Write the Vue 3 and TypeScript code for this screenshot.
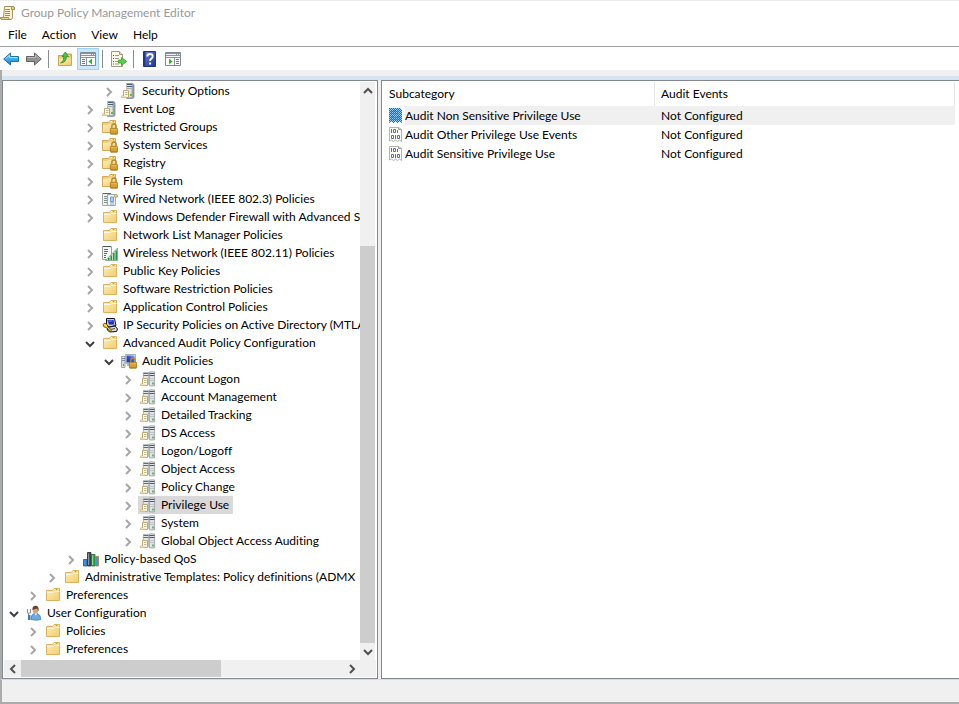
<script setup lang="ts">
import { ref } from 'vue'

interface TreeNode {
  label: string
  level: number
  icon: string
  state: 'open' | 'closed' | 'leaf'
}

interface AuditRow {
  name: string
  events: string
}

const menus: string[] = ['File', 'Action', 'View', 'Help']

const nodes: TreeNode[] = [
  { label: 'Security Options', level: 5, icon: 'server', state: 'closed' },
  { label: 'Event Log', level: 4, icon: 'server', state: 'closed' },
  { label: 'Restricted Groups', level: 4, icon: 'folder-lock', state: 'closed' },
  { label: 'System Services', level: 4, icon: 'folder-lock', state: 'closed' },
  { label: 'Registry', level: 4, icon: 'folder-lock', state: 'closed' },
  { label: 'File System', level: 4, icon: 'folder-lock', state: 'closed' },
  { label: 'Wired Network (IEEE 802.3) Policies', level: 4, icon: 'wired', state: 'closed' },
  { label: 'Windows Defender Firewall with Advanced Se', level: 4, icon: 'folder', state: 'closed' },
  { label: 'Network List Manager Policies', level: 4, icon: 'folder', state: 'leaf' },
  { label: 'Wireless Network (IEEE 802.11) Policies', level: 4, icon: 'wireless', state: 'closed' },
  { label: 'Public Key Policies', level: 4, icon: 'folder', state: 'closed' },
  { label: 'Software Restriction Policies', level: 4, icon: 'folder', state: 'closed' },
  { label: 'Application Control Policies', level: 4, icon: 'folder', state: 'closed' },
  { label: 'IP Security Policies on Active Directory (MTLA', level: 4, icon: 'ipsec', state: 'closed' },
  { label: 'Advanced Audit Policy Configuration', level: 4, icon: 'folder', state: 'open' },
  { label: 'Audit Policies', level: 5, icon: 'audit', state: 'open' },
  { label: 'Account Logon', level: 6, icon: 'servers', state: 'closed' },
  { label: 'Account Management', level: 6, icon: 'servers', state: 'closed' },
  { label: 'Detailed Tracking', level: 6, icon: 'servers', state: 'closed' },
  { label: 'DS Access', level: 6, icon: 'servers', state: 'closed' },
  { label: 'Logon/Logoff', level: 6, icon: 'servers', state: 'closed' },
  { label: 'Object Access', level: 6, icon: 'servers', state: 'closed' },
  { label: 'Policy Change', level: 6, icon: 'servers', state: 'closed' },
  { label: 'Privilege Use', level: 6, icon: 'servers', state: 'closed' },
  { label: 'System', level: 6, icon: 'servers', state: 'closed' },
  { label: 'Global Object Access Auditing', level: 6, icon: 'servers', state: 'closed' },
  { label: 'Policy-based QoS', level: 3, icon: 'qos', state: 'closed' },
  { label: 'Administrative Templates: Policy definitions (ADMX', level: 2, icon: 'folder', state: 'closed' },
  { label: 'Preferences', level: 1, icon: 'folder', state: 'closed' },
  { label: 'User Configuration', level: 0, icon: 'user', state: 'open' },
  { label: 'Policies', level: 1, icon: 'folder', state: 'closed' },
  { label: 'Preferences', level: 1, icon: 'folder', state: 'closed' },
]

const rows: AuditRow[] = [
  { name: 'Audit Non Sensitive Privilege Use', events: 'Not Configured' },
  { name: 'Audit Other Privilege Use Events', events: 'Not Configured' },
  { name: 'Audit Sensitive Privilege Use', events: 'Not Configured' },
]

const selectedNode = ref<string>('Privilege Use')
const selectedRow = ref<number>(0)
const indent = (level: number): string => `${level * 19}px`
</script>

<template>
  <svg class="sprite" aria-hidden="true">
    <defs>
      <linearGradient id="g-folder" x1="0" y1="0" x2="1" y2="1">
        <stop offset="0" stop-color="#ffeeb5" />
        <stop offset="1" stop-color="#f2cc72" />
      </linearGradient>
      <linearGradient id="g-tower" x1="0" y1="0" x2="1" y2="0">
        <stop offset="0" stop-color="#d3d9dc" />
        <stop offset="1" stop-color="#8d969b" />
      </linearGradient>
      <linearGradient id="g-lock" x1="0" y1="0" x2="0" y2="1">
        <stop offset="0" stop-color="#f0c548" />
        <stop offset="1" stop-color="#b8821a" />
      </linearGradient>
      <linearGradient id="g-blue" x1="0" y1="0" x2="0" y2="1">
        <stop offset="0" stop-color="#6cc8f8" />
        <stop offset="1" stop-color="#128ad8" />
      </linearGradient>
      <linearGradient id="g-help" x1="0" y1="0" x2="1" y2="1">
        <stop offset="0" stop-color="#6d84d6" />
        <stop offset="1" stop-color="#1b3597" />
      </linearGradient>
      <linearGradient id="g-screen" x1="1" y1="0" x2="0" y2="1">
        <stop offset="0" stop-color="#8aa8f0" />
        <stop offset="0.5" stop-color="#2f50cf" />
        <stop offset="1" stop-color="#1b2fa3" />
      </linearGradient>
      <pattern id="p-dither" width="2" height="2" patternUnits="userSpaceOnUse">
        <rect width="1" height="1" fill="#0078d7" />
        <rect x="1" y="1" width="1" height="1" fill="#0078d7" />
      </pattern>
      <g id="d-scroll">
        <path d="M2.500 7.500h5v7h-7v-1.500h2z" fill="#fdf8e2" stroke="#c0a873" />
        <path d="M4 9.500h2.500M4 11.500h2.500" stroke="#c5b88e" />
        <path d="M.5 13h5v1.500h-5z" fill="#efdfae" />
      </g>
      <g id="d-lock">
        <path d="M9.800 9V7.500a2.200 2.500 0 0 1 4.400 0V9" fill="none" stroke="#b08a30" stroke-width="1.300" />
        <rect x="8.400" y="9.400" width="7.200" height="5.800" rx=".6" fill="url(#g-lock)" stroke="#a3741a" stroke-width=".8" />
        <path d="M9 11.500h6M9 13.500h6" stroke="#d9a535" stroke-width=".8" />
      </g>
    </defs>

    <symbol id="i-title" viewBox="0 0 16 16">
      <path d="M4.500 1.500h9l1 1v2h-2v8q0 2-2 2H2q-1.500 0-1.500-2h3z" fill="#fbf3d3" stroke="#a8905c" />
      <path d="M12 1.500q-1 1-.5 3h3V3q0-1.500-1.500-1.500z" fill="#e7cf8c" stroke="#a8905c" />
      <path d="M.5 12.500h8q0 2 2 2H2.500q-2 0-2-2z" fill="#e9d08c" stroke="#a8905c" />
      <path d="M5 4.500h5M5 6.500h5M5 8.500h5M5 10.500h5" stroke="#8e8e86" />
    </symbol>

    <symbol id="i-back" viewBox="0 0 16 16">
      <path d="M.7 8 7.500 2v3.500h8v5h-8V14z" fill="url(#g-blue)" stroke="#1672b0" stroke-linejoin="round" />
      <path d="M2.500 7.700 6.600 4.200v2.300h8" fill="none" stroke="#a6e0fc" />
    </symbol>
    <symbol id="i-forward" viewBox="0 0 16 16">
      <path d="M15.300 8 8.500 2v3.500h-8v5h8V14z" fill="#929292" stroke="#656565" stroke-linejoin="round" />
      <path d="M1.500 6.500h8V4.200l4 3.500" fill="none" stroke="#bcbcbc" />
    </symbol>
    <symbol id="i-up" viewBox="0 0 16 16">
      <path d="M1.500 4.500h5.500l1.500-1.500h6v11.500h-13z" fill="#eccb75" stroke="#cfa44a" />
      <path d="M2 7.500h12v6.500H2z" fill="url(#g-folder)" />
      <path d="M9.500 3.500h4v1.500h-4z" fill="#fff" stroke="#b7964c" stroke-width=".6" />
      <path d="M3.500 12Q7 10.500 7 5.500H5L8.300 1l3.200 4.500H9.300q.3 6-5.800 6.500z" fill="#4cc445" stroke="#2c8f2b" stroke-width=".8" stroke-linejoin="round" />
    </symbol>
    <symbol id="i-pane-left" viewBox="0 0 16 16">
      <path d="M.5 1.500h15v13H.5z" fill="#fdfdfd" stroke="#808896" />
      <path d="M1 2h14v3H1z" fill="#8993a4" />
      <path d="M1 3.500h10M12 3.500h1M14 3.500h1" stroke="#eef1f6" />
      <path d="M1 6.500h14M6.500 7v7" stroke="#8b93a0" />
      <path d="M2 8.500h3M2 10.500h3M2 12.500h3" stroke="#6f7c93" />
      <path d="M12 7.500v6L8.500 10.500z" fill="#2fb52b" />
    </symbol>
    <symbol id="i-pane-right" viewBox="0 0 16 16">
      <path d="M.5 1.500h15v13H.5z" fill="#fdfdfd" stroke="#808896" />
      <path d="M1 2h14v3H1z" fill="#8993a4" />
      <path d="M1 3.500h10M12 3.500h1M14 3.500h1" stroke="#eef1f6" />
      <path d="M1 6.500h14M9.500 7v7" stroke="#8b93a0" />
      <path d="M11 8.500h3M11 10.500h3M11 12.500h3" stroke="#6f7c93" />
      <path d="M4 7.500v6l3.500-3z" fill="#2fb52b" />
    </symbol>
    <symbol id="i-export" viewBox="0 0 16 16">
      <path d="M.5.5h8l3 3v12H.5z" fill="#fdf9e6" stroke="#a49a80" />
      <path d="M8.500.5v3h3" fill="#e8dfc0" stroke="#a49a80" />
      <path d="M2 4.500h1M2 7.500h1M2 10.500h1M2 13h1" stroke="#555" />
      <path d="M4 4.500h4M4 7.500h4M4 10.500h3M4 13h4" stroke="#9a9a9a" />
      <path d="M7.500 9h3V6.500L15.700 10.500l-5.200 4V12h-3z" fill="#5bd04f" stroke="#2f9e2c" stroke-width=".8" stroke-linejoin="round" />
    </symbol>
    <symbol id="i-help" viewBox="0 0 16 16">
      <path d="M1.500.5h12v15h-12z" fill="url(#g-help)" stroke="#20367f" />
      <path d="M2 1h1.500v14H2z" fill="#243a8a" />
      <path d="M5.300 5.500Q5.300 3 8 3t2.700 2.300Q10.700 7 9.100 7.800 8.100 8.400 8.100 10" fill="none" stroke="#fff" stroke-width="1.900" />
      <path d="M7.100 11.500h2v2h-2z" fill="#fff" />
    </symbol>

    <symbol id="i-folder" viewBox="0 0 16 16">
      <path d="M1.500 3.500h6l1.500-2h5.500v12h-13z" fill="url(#g-folder)" stroke="#dcb25c" />
      <path d="M9 2.500h4.500" stroke="#fff" />
      <path d="M10.500 2.500h2" stroke="#6aa7d8" />
      <path d="M2 5.500h6.500l1-1h5" fill="none" stroke="#fff8da" />
    </symbol>
    <symbol id="i-folder-lock" viewBox="0 0 16 16">
      <path d="M.5 3.500h6l1.500-2h5.500v12H.5z" fill="#eed083" stroke="#d4aa55" />
      <path d="M8.500 2.500h4" stroke="#fff" />
      <path d="M10.500 2.500h1.500" stroke="#6aa7d8" />
      <path d="M1 13V6h4.500l1-1H13v8z" fill="url(#g-folder)" />
      <use href="#d-lock" />
    </symbol>
    <symbol id="i-server" viewBox="0 0 16 16">
      <path d="M5.500.5h6l1.500 1v13l-1.500 1h-6z" fill="url(#g-tower)" stroke="#848d92" stroke-width=".8" />
      <path d="M5.500 1h5v14h-5z" fill="#dfe3e5" />
      <path d="M6 1.500h5M6 3.500h5" stroke="#47606f" />
      <path d="M6 5.500h4.500M6 14.500h5" stroke="#a7b0b5" />
      <path d="M9 11h2v2H9z" fill="#5cc04a" />
      <use href="#d-scroll" />
    </symbol>
    <symbol id="i-servers" viewBox="0 0 16 16">
      <path d="M3.400 1.400h5.200v12H3.400z" fill="#e3e7e9" stroke="#a2abb0" stroke-width=".8" />
      <path d="M3.500 2.500h5M3.500 4.500h5" stroke="#5a6f7c" />
      <path d="M9.400.9h5.200v14H9.400z" fill="#dfe3e5" stroke="#929b9f" stroke-width=".8" />
      <path d="M9.500 2.500h5M9.500 4.500h5" stroke="#47606f" />
      <path d="M10 7.500h4M10 9.500h4" stroke="#bcc4c8" />
      <path d="M12 11.500h2v2h-2z" fill="#5cc04a" />
      <use href="#d-scroll" />
    </symbol>
    <symbol id="i-wired" viewBox="0 0 16 16">
      <path d="M.5 2.500h5v12h-5z" fill="#f2f3ef" stroke="#a5aaa5" />
      <path d="M2 5.500h3M2 7.500h3M2 9.500h3M2 11.500h3" stroke="#7c8f8c" />
      <path d="M1 2.500h8" stroke="#57656a" />
      <path d="M5.500 3.500h9l.9 1v1.500h-2v8.500h-8z" fill="#f1f4f6" stroke="#9aa8b3" />
      <path d="M12.500 3.500h2.500v2.500h-2.500z" fill="#efdfae" stroke="#b79f6c" stroke-width=".8" />
      <path d="M8.500 6h3v4.500h-3z" fill="#a9cdec" stroke="#5f90bf" stroke-width=".8" />
      <path d="M9 11h2v3.500H9z" fill="#fff" stroke="#6f96b9" stroke-width=".8" />
    </symbol>
    <symbol id="i-wireless" viewBox="0 0 16 16">
      <path d="M.5 1.500h9v13h-9z" fill="#f5f6f4" stroke="#98a09d" />
      <path d="M1 1.500h8" stroke="#47555a" />
      <path d="M2 4.500h4M2 6.500h4M2 8.500h3M2 10.500h2M2 12.500h2" stroke="#53706a" />
      <path d="M3.500 15.500 15.500 3v12.500z" fill="#c6e6c6" stroke="#6fa67c" stroke-width=".8" />
      <path d="M6 13h1.500v2H6zM8.500 10.500H10V15H8.500zM11 8h1.500v7H11zM13.500 5.500H15V15h-1.500z" fill="#27924a" />
    </symbol>
    <symbol id="i-ipsec" viewBox="0 0 16 16">
      <path d="M4.500 1.500h8l1.500 7-7 1.500-2.500-2z" fill="#c6cbd2" stroke="#111" />
      <path d="M5.500 3h6l.8 4.500H7z" fill="#1c2fc0" />
      <path d="M6.500 4h4" stroke="#7f93f2" />
      <path d="M5 10.500l8-1.500 2.500 3-1 2.500-7 .5-2-2z" fill="#d7dade" stroke="#111" />
      <path d="M8 12.500l5-1" stroke="#555" />
      <path d="M1 7.500l2-1.500 2.500 2v1.500l4 3.500-1.300 1.500L4.500 10.500 2 10z" fill="#f5dc2c" stroke="#4b4300" stroke-width=".8" />
    </symbol>
    <symbol id="i-audit" viewBox="0 0 16 16">
      <path d="M.5 3.500h3.500v11H.5z" fill="#d9dddf" stroke="#8e989d" stroke-width=".8" />
      <path d="M1 5.500h3M1 7.500h3" stroke="#7d8c96" />
      <path d="M2 11h1v2H2z" fill="#4db83d" />
      <path d="M4.500 1.500h10v9h-10z" fill="#e4e8ee" stroke="#a7b0bc" />
      <path d="M5.500 2.500h8v7h-8z" fill="url(#g-screen)" />
      <path d="M6 12h4" stroke="#b4bcc4" stroke-width="2" />
      <use href="#d-lock" />
    </symbol>
    <symbol id="i-qos" viewBox="0 0 16 16">
      <path d="M.5 8.500h3.500v6.500H.5z" fill="#3a8fdc" stroke="#1b5799" stroke-width=".8" />
      <path d="M4.500 1.500H8V15H4.500z" fill="#444f58" stroke="#1f2930" stroke-width=".8" />
      <path d="M8.500 3.500H12V15H8.500z" fill="#3dac4c" stroke="#1d6c2a" stroke-width=".8" />
      <path d="M12.500 5.500h3V15h-3z" fill="#3d97dd" stroke="#c0703a" stroke-width=".8" />
      <path d="M5.500 2.500V14" stroke="#8b969e" />
      <path d="M9.500 4.500V14" stroke="#7fdc86" />
    </symbol>
    <symbol id="i-user" viewBox="0 0 16 16">
      <path d="M5 14.500q0-5 3-6h3q3.800 1 3.800 6-4 1.500-9.800 0z" fill="#6bade2" stroke="#3f7fb8" stroke-width=".8" />
      <path d="M8.500 8.300l1.300 2.200 1.400-2.200z" fill="#fff" />
      <ellipse cx="9.500" cy="4.800" rx="2.900" ry="3.700" fill="#d9a67c" />
      <path d="M6.500 5Q6 1 9.500.8q3.700 0 3 5.200-1-.5-1.200-2.500Q8.500 4 6.500 5z" fill="#6a4326" />
      <path d="M1.500 4v3.500l1 1V15M4.500 4v3.500l-1 1" fill="none" stroke="#8b98a3" stroke-width="1.200" />
      <path d="M2 10h2.500v5H2z" fill="#4a78b5" />
    </symbol>
    <symbol id="i-binary" viewBox="0 0 16 16">
      <path d="M.5.5h9l3 2v12l-2-1.500-2 1.500-2-1.500-2 1.500-2-1.500-2 1z" fill="#fff" stroke="#b4b4b4" />
      <path d="M9.500.5v2h3" fill="none" stroke="#a0a0a0" />
      <path d="M2.500 2v4M8.500 3v3M4.500 2.500h2v3h-2zM2.500 8.500h2v3h-2zM6.500 8v4M8.500 8.500h2v3h-2z" fill="none" stroke="#6464b4" />
    </symbol>
    <symbol id="i-binary-selected" viewBox="0 0 16 16">
      <path d="M0 0h11l2 2v13l-2.500-1.500-2 1.500-2-1.500-2 1.500-2-1.500L0 15z" fill="#8fcdf8" />
      <path d="M0 0h11l2 2v13l-2.500-1.500-2 1.500-2-1.500-2 1.500-2-1.500L0 15z" fill="url(#p-dither)" />
      <path d="M2.500 2v4M8.500 3v3M4.500 2.500h2v3h-2zM2.500 8.500h2v3h-2zM6.500 8v4M8.500 8.500h2v3h-2z" fill="none" stroke="#0f74d0" stroke-opacity=".5" />
    </symbol>
  </svg>

  <div class="window">
    <header class="titlebar">
      <svg class="icon"><use href="#i-title" /></svg>
      <h1 class="title">Group Policy Management Editor</h1>
    </header>

    <nav class="menubar">
      <button v-for="menu in menus" :key="menu" type="button" class="menu">{{ menu }}</button>
    </nav>

    <div class="toolbar" role="toolbar">
      <button type="button" class="tool" aria-label="Back"><svg class="icon"><use href="#i-back" /></svg></button>
      <button type="button" class="tool" aria-label="Forward"><svg class="icon"><use href="#i-forward" /></svg></button>
      <span class="separator"></span>
      <button type="button" class="tool" aria-label="Up one level"><svg class="icon"><use href="#i-up" /></svg></button>
      <button type="button" class="tool active" aria-label="Show or hide console tree" aria-pressed="true"><svg class="icon"><use href="#i-pane-left" /></svg></button>
      <span class="separator"></span>
      <button type="button" class="tool" aria-label="Export list"><svg class="icon"><use href="#i-export" /></svg></button>
      <span class="separator"></span>
      <button type="button" class="tool" aria-label="Help"><svg class="icon"><use href="#i-help" /></svg></button>
      <button type="button" class="tool" aria-label="Show or hide action pane"><svg class="icon"><use href="#i-pane-right" /></svg></button>
    </div>

    <main class="workspace">
      <section class="pane tree-pane">
        <ul class="tree" role="tree">
          <li
            v-for="(node, i) in nodes"
            :key="i"
            class="node"
            role="treeitem"
            :aria-level="node.level + 1"
            :aria-selected="node.label === selectedNode"
            :style="{ paddingLeft: indent(node.level) }"
          >
            <button
              v-if="node.state !== 'leaf'"
              type="button"
              class="expander"
              :class="node.state"
              :aria-label="node.state === 'open' ? 'Collapse' : 'Expand'"
            >
              <svg v-if="node.state === 'closed'" class="chevron" viewBox="0 0 10 10"><path d="M3 1l4 4-4 4" /></svg>
              <svg v-else class="chevron" viewBox="0 0 10 10"><path d="M1 3l4 4 4-4" /></svg>
            </button>
            <span v-else class="expander"></span>
            <button
              type="button"
              class="entry"
              :class="{ selected: node.label === selectedNode }"
              @click="selectedNode = node.label"
            >
              <svg class="icon"><use :href="`#i-${node.icon}`" /></svg>
              <span class="entry-label">{{ node.label }}</span>
            </button>
          </li>
        </ul>
        <div class="scroll vertical">
          <button type="button" class="scroll-arrow" aria-label="Scroll up"><svg class="chevron" viewBox="0 0 10 10"><path d="M1 7l4-4 4 4" /></svg></button>
          <div class="track"><div class="thumb"></div></div>
          <button type="button" class="scroll-arrow" aria-label="Scroll down"><svg class="chevron" viewBox="0 0 10 10"><path d="M1 3l4 4 4-4" /></svg></button>
        </div>
        <div class="scroll horizontal">
          <button type="button" class="scroll-arrow" aria-label="Scroll left"><svg class="chevron" viewBox="0 0 10 10"><path d="M7 1L3 5l4 4" /></svg></button>
          <div class="track"><div class="thumb"></div></div>
          <button type="button" class="scroll-arrow" aria-label="Scroll right"><svg class="chevron" viewBox="0 0 10 10"><path d="M3 1l4 4-4 4" /></svg></button>
        </div>
        <div class="scroll-corner"></div>
      </section>

      <section class="pane list-pane">
        <table class="list">
          <colgroup>
            <col class="col-name" />
            <col />
          </colgroup>
          <thead>
            <tr>
              <th scope="col">Subcategory</th>
              <th scope="col">Audit Events</th>
            </tr>
          </thead>
          <tbody>
            <tr
              v-for="(row, i) in rows"
              :key="row.name"
              :class="{ selected: i === selectedRow }"
              @click="selectedRow = i"
            >
              <td>
                <div class="cell">
                  <svg class="icon"><use :href="i === selectedRow ? '#i-binary-selected' : '#i-binary'" /></svg>
                  <span>{{ row.name }}</span>
                </div>
              </td>
              <td>{{ row.events }}</td>
            </tr>
          </tbody>
        </table>
      </section>
    </main>

    <footer class="statusbar"></footer>
  </div>
</template>

<style>
body {
  background: #fff;
}
</style>

<style scoped>
.sprite {
  position: absolute;
  width: 0;
  height: 0;
}

.window {
  box-sizing: border-box;
  display: flex;
  flex-direction: column;
  min-height: 100vh;
  background: #fff;
  color: #000;
  font-family: Lato, 'Open Sans', sans-serif;
  font-size: 12px;
  font-variant-ligatures: none;
  line-height: 18px;
}

button {
  margin: 0;
  padding: 0;
  border: 0;
  background: transparent;
  color: inherit;
  font: inherit;
}

.icon {
  display: block;
  flex: none;
  width: 16px;
  height: 16px;
}

.titlebar {
  display: flex;
  align-items: center;
  gap: 5px;
  height: 24px;
  border-top: 1px solid #ececec;
}

.title {
  margin: 0;
  color: #999;
  font-size: 12px;
  font-weight: 400;
}

.menubar {
  display: flex;
  align-items: center;
  gap: 15px;
  height: 19px;
  padding: 0 8px 2px;
}

.toolbar {
  display: flex;
  align-items: center;
  gap: 1px;
  height: 23px;
  border-top: 1px solid #a0a0a0;
}

.tool {
  box-sizing: border-box;
  display: flex;
  align-items: center;
  justify-content: center;
  width: 22px;
  height: 22px;
}

.tool.active {
  border: 1px solid #99d1ff;
  background: #cce8ff;
}

.separator {
  width: 1px;
  height: 18px;
  margin: 0 4px 0 2px;
  background: #8d8d8d;
}

.workspace {
  display: flex;
  flex: 1;
  gap: 3px;
  border-left: 2px solid #ababab;
  background: linear-gradient(#f0f0f0 6px, #d6e4f1 6px, #d6e4f1 10px, #f0f0f0 10px);
  padding-top: 10px;
}

.pane {
  box-sizing: border-box;
  border: 1px solid #828790;
  background: #fff;
  padding: 1px;
}

.tree-pane {
  display: grid;
  grid-template: minmax(0, 1fr) 17px / minmax(0, 1fr) 16px;
  flex: 0 0 39.3%;
}

.tree {
  margin: 0;
  padding: 0 0 2px;
  list-style: none;
  overflow: hidden;
}

.node {
  display: flex;
  align-items: center;
  height: 18px;
}

.expander {
  display: flex;
  flex: none;
  align-items: center;
  justify-content: center;
  width: 20px;
  height: 16px;
  padding-top: 2px;
  color: #a6a6a6;
}

.expander.open {
  color: #404040;
}

.chevron {
  display: block;
  width: 10px;
  height: 10px;
  fill: none;
  stroke: currentColor;
  stroke-width: 2;
}

.entry {
  display: flex;
  align-items: center;
  gap: 5px;
  height: 18px;
  padding: 0 4px 0 2px;
}

.entry.selected {
  background: #d9d9d9;
}

.entry-label {
  white-space: nowrap;
}

.scroll {
  display: flex;
  background: #f0f0f0;
}

.scroll.vertical {
  flex-direction: column;
  margin-right: 1px;
}

.scroll-corner {
  background: #f0f0f0;
}

.scroll-arrow {
  display: flex;
  flex: none;
  align-items: center;
  justify-content: center;
  width: 17px;
  height: 17px;
  color: #505050;
}

.vertical .scroll-arrow {
  width: 15px;
}

.track {
  display: flex;
  flex: 1;
}

.vertical .track {
  flex-direction: column;
  justify-content: flex-end;
}

.thumb {
  background: #cdcdcd;
}

.vertical .thumb {
  height: 73%;
}

.horizontal .thumb {
  width: 62%;
}

.list-pane {
  flex: 1;
  border-right: 0;
  padding-right: 4px;
}

.list {
  width: 100%;
  border-collapse: separate;
  border-spacing: 0;
  table-layout: fixed;
}

.col-name {
  width: 272px;
}

.list th {
  height: 24px;
  padding: 0 6px;
  border-right: 1px solid #e5e5e5;
  font-weight: 400;
  text-align: left;
}

.list td {
  height: 19px;
  padding: 0 6px;
}

.cell {
  display: flex;
  align-items: center;
}

.selected td:last-child,
.selected .cell span {
  background: #f0f0f0;
}

.cell span {
  flex: 1;
  margin-right: -6px;
  line-height: 19px;
}

.statusbar {
  height: 22px;
  border-top: 1px solid #d8dce2;
  border-bottom: 2px solid #ababab;
  border-left: 2px solid #ababab;
  background: #f0f0f0;
}
</style>
